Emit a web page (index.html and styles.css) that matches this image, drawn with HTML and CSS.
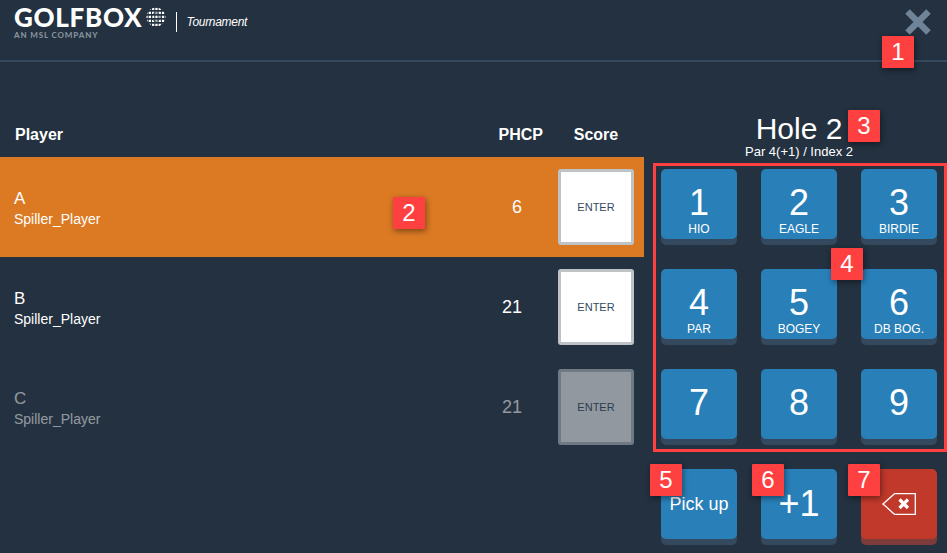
FILE: index.html
```html
<!DOCTYPE html>
<html lang="en">
<head>
<meta charset="utf-8">
<title>GolfBox Tournament</title>
<link rel="stylesheet" href="styles.css">
</head>
<body>
<div class="app">
  <header class="topbar">
    <div class="brand">
      <div class="logo">
        <div class="logo-main">
          <span class="logo-word">GOLFBOX</span>
          <svg class="globe" viewBox="0 0 20 20" width="20" height="20" fill="none" stroke="#fff">
            <defs><clipPath id="ball"><circle cx="10" cy="10" r="9.6"/></clipPath></defs>
            <g clip-path="url(#ball)">
              <path d="M0 1.9h20M0 5.9h20M0 9.9h20M0 13.9h20M0 17.9h20" stroke-width="2.3" stroke-dasharray="2.3 1" stroke-dashoffset="0.6"/>
            </g>
            <circle cx="10" cy="10" r="4.2" stroke="#233140" stroke-width="0.8"/>
          </svg>
        </div>
        <div class="logo-sub">AN MSL COMPANY</div>
      </div>
      <span class="product">Tournament</span>
    </div>
    <button class="close" aria-label="Close">
      <svg viewBox="0 0 26 26" width="26" height="26"><path d="M2.5 2.5l21 21M23.5 2.5l-21 21" stroke="#708499" stroke-width="6.4" fill="none"/></svg>
    </button>
  </header>

  <main class="content">
    <section class="players">
      <div class="players-head">
        <span class="col-name">Player</span>
        <span class="col-hcp">PHCP</span>
        <span class="col-score">Score</span>
      </div>
      <div class="player active">
        <div class="col-name"><div class="initial">A</div><div class="sub">Spiller_Player</div></div>
        <div class="col-hcp">6</div>
        <div class="col-score"><div class="enter">ENTER</div></div>
      </div>
      <div class="player">
        <div class="col-name"><div class="initial">B</div><div class="sub">Spiller_Player</div></div>
        <div class="col-hcp">21</div>
        <div class="col-score"><div class="enter">ENTER</div></div>
      </div>
      <div class="player dim">
        <div class="col-name"><div class="initial">C</div><div class="sub">Spiller_Player</div></div>
        <div class="col-hcp">21</div>
        <div class="col-score"><div class="enter">ENTER</div></div>
      </div>
    </section>

    <section class="pad">
      <div class="hole">
        <div class="hole-title">Hole 2</div>
        <div class="hole-info">Par 4(+1) / Index 2</div>
      </div>
      <div class="keys-frame">
        <div class="keys">
          <div class="key"><span class="num">1</span><span class="lab">HIO</span></div>
          <div class="key"><span class="num">2</span><span class="lab">EAGLE</span></div>
          <div class="key"><span class="num">3</span><span class="lab">BIRDIE</span></div>
          <div class="key"><span class="num">4</span><span class="lab">PAR</span></div>
          <div class="key"><span class="num">5</span><span class="lab">BOGEY</span></div>
          <div class="key"><span class="num">6</span><span class="lab">DB BOG.</span></div>
          <div class="key"><span class="num">7</span></div>
          <div class="key"><span class="num">8</span></div>
          <div class="key"><span class="num">9</span></div>
        </div>
      </div>
      <div class="keys actions">
        <div class="key center"><span class="pick">Pick up</span></div>
        <div class="key center"><span class="plus">+1</span></div>
        <div class="key center red">
          <svg viewBox="0 0 34 22" width="34" height="22" fill="none"><path d="M33.3.7H12.5C9 3.5 5 8 .9 11c4.100 3 8.100 7.500 11.600 10.300h20.800z" stroke="#fff" stroke-width="1.300"/><path d="M17.500 6.500l8.500 8.500M26 6.500l-8.500 8.500" stroke="#fff" stroke-width="3.200"/></svg>
        </div>
      </div>
    </section>
  </main>

  <span class="marker m1">1</span>
  <span class="marker m2">2</span>
  <span class="marker m3">3</span>
  <span class="marker m4">4</span>
  <span class="marker m5">5</span>
  <span class="marker m6">6</span>
  <span class="marker m7">7</span>
</div>
</body>
</html>
```

FILE: styles.css
```css
* { box-sizing: border-box; }
html, body { margin: 0; padding: 0; }
body {
  background: #233140;
  color: #fff;
  font-family: "Liberation Sans", Arial, sans-serif;
  overflow: hidden;
}
.app {
  position: relative;
  width: 947px;
  height: 553px;
  overflow: hidden;
}
.topbar {
  display: flex;
  justify-content: space-between;
  align-items: flex-start;
  height: 62px;
  border-bottom: 2px solid #34495e;
}
.brand {
  display: flex;
  align-items: flex-start;
  padding: 7px 0 0 14px;
}
.logo-main {
  display: flex;
  align-items: center;
  gap: 4px;
  height: 20px;
}
.logo-word {
  font-family: Lato, sans-serif;
  font-weight: 900;
  font-size: 26px;
  line-height: 20px;
  letter-spacing: 0.7px;
}
.logo-sub {
  margin-top: 4px;
  font-family: Lato, sans-serif;
  font-weight: 900;
  font-size: 8px;
  line-height: 8px;
  letter-spacing: 0.85px;
  color: #85909b;
}
.product {
  margin: 5px 0 0 10px;
  padding-left: 9px;
  height: 20px;
  border-left: 1px solid #fff;
  font-size: 12px;
  line-height: 20px;
  font-style: italic;
  letter-spacing: -0.3px;
}
.close {
  margin: 9px 16px 0 0;
  padding: 0;
  width: 26px;
  height: 26px;
  background: none;
  border: 0;
}
.close svg { display: block; }
.content { display: flex; }
.players { width: 644px; }
.players-head {
  display: flex;
  align-items: center;
  height: 95px;
  padding-top: 50px;
  font-size: 16px;
  font-weight: bold;
}
.player {
  display: flex;
  align-items: center;
  height: 100px;
}
.player.active { background: #dc7a24; }
.player.dim { opacity: 0.5; }
.col-name { flex: 1; padding: 4px 0 0 14px; }
.players-head .col-name { padding: 0 0 0 15px; }
.col-hcp {
  width: 90px;
  padding-right: 36px;
  font-size: 18px;
  text-align: right;
}
.players-head .col-hcp {
  width: 100px;
  padding-right: 15px;
  font-size: 16px;
}
.col-score {
  width: 86px;
  padding-right: 10px;
  text-align: center;
}
.initial { font-size: 17px; line-height: 20px; }
.sub { font-size: 14px; line-height: 20px; }
.enter {
  display: flex;
  align-items: center;
  justify-content: center;
  width: 76px;
  height: 76px;
  background: #fff;
  border: 3px solid #bdc3c7;
  border-radius: 3px;
  color: #34495e;
  font-size: 11px;
}
.pad { padding-left: 9px; }
.hole {
  width: 292px;
  height: 35px;
  margin-top: 50px;
  text-align: center;
}
.hole-title { font-size: 30px; line-height: 33px; }
.hole-info { font-size: 13px; line-height: 14px; }
.keys-frame {
  width: 294px;
  height: 289px;
  margin-top: 16px;
  padding: 3px 0 0 5px;
  border: 3px solid #ff4040;
}
.keys {
  display: grid;
  grid-template-columns: repeat(3, 76px);
  grid-auto-rows: 76px;
  gap: 24px;
}
.actions { margin: 17px 0 0 8px; }
.key {
  display: flex;
  flex-direction: column;
  align-items: center;
  height: 70px;
  padding-top: 16px;
  background: #2980b9;
  border-radius: 5px;
  box-shadow: 0 6px 0 0 #34495e;
}
.num { font-size: 36px; line-height: 36px; }
.lab { font-size: 12px; line-height: 13px; margin-top: 2px; }
.center { justify-content: center; padding-top: 0; }
.pick { font-size: 18px; }
.plus { font-size: 36px; }
.red { background: #c0392b; box-shadow: 0 6px 0 0 #7d3c3a; }
.marker {
  position: absolute;
  display: flex;
  align-items: center;
  justify-content: center;
  width: 32px;
  height: 32px;
  background: #ff4040;
  border-radius: 1px;
  box-shadow: 1px 2px 6px rgba(0, 0, 0, 0.45);
  font-size: 24px;
  color: #fff;
}
.m1 { left: 882px; top: 36px; }
.m2 { left: 393px; top: 197px; }
.m3 { left: 848px; top: 110px; }
.m4 { left: 831px; top: 248px; }
.m5 { left: 650px; top: 464px; }
.m6 { left: 752px; top: 464px; }
.m7 { left: 848px; top: 464px; }
```
